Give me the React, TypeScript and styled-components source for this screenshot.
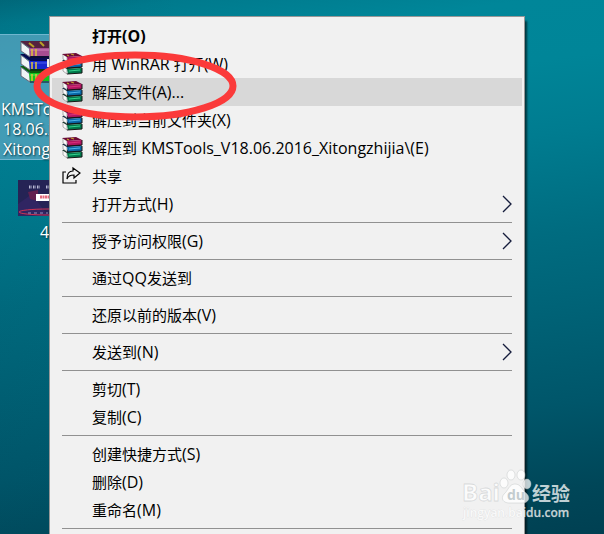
import React from "react";
import styled, { createGlobalStyle } from "styled-components";

const GlobalStyle = createGlobalStyle`
  * { box-sizing: border-box; }
  body { margin: 0; overflow: hidden; }
`;

const Desktop = styled.main`
  position: relative;
  min-height: 100vh;
  overflow: hidden;
  padding-top: 34px;
  font-family: "Open Sans", "Noto Sans CJK SC", sans-serif;
  background:
    linear-gradient(90deg, rgba(0, 60, 80, 0.08), rgba(0, 60, 80, 0) 30%),
    linear-gradient(172deg, #006b7d 0%, #007a8d 4%, #008699 12%, #008598 22%, #007c90 34%, #006c80 50%, #006377 62%, #00566a 78%, #004658 92%, #004052 100%);
`;

const Shortcut = styled.figure<{ $selected?: boolean }>`
  width: 96px;
  margin: 0 0 16px;
  padding-top: 4px;
  height: ${(p) => (p.$selected ? "126px" : "auto")};
  color: #fff;
  background: ${(p) => (p.$selected ? "rgba(110, 175, 205, 0.6)" : "none")};
  border: ${(p) => (p.$selected ? "1px solid #6fb6cf" : "0")};
  border-left-width: 0;
  svg { display: block; margin-left: 18px; }
`;

const Caption = styled.figcaption<{ $single?: boolean }>`
  display: flex;
  flex-direction: column;
  padding-top: ${(p) => (p.$single ? "6px" : "16px")};
  padding-left: ${(p) => (p.$single ? "40px" : "1px")};
  font-size: 16px;
  line-height: 20px;
  white-space: nowrap;
  text-shadow: 1px 1px 2px #00303c;
  span + span { padding-left: 2px; }
`;

const Menu = styled.div`
  position: absolute;
  top: 16px;
  left: 49px;
  right: 79px;
  padding: 5px 2px;
  background: #f1f1f1;
  border: 1px solid #979797;
  box-shadow: 3px 4px 2px -1px rgba(0, 0, 0, 0.6);
`;

const Item = styled.button<{ $active?: boolean; $strong?: boolean }>`
  display: grid;
  grid-template-columns: 30px 1fr 12px;
  align-items: center;
  width: 100%;
  height: 28px;
  padding: 0 8px 0 10px;
  border: 0;
  background: ${(p) => (p.$active ? "#d8d8d8" : "transparent")};
  color: #000;
  font-family: inherit;
  font-size: 15px;
  font-weight: ${(p) => (p.$strong ? 700 : 400)};
  line-height: 28px;
  text-align: left;
  white-space: nowrap;
  svg { display: block; }
`;

const Latin = styled.span`
  font-size: 16px;
`;

const Divider = styled.hr`
  height: 1px;
  margin: 4px 10px;
  border: 0;
  background: #919191;
`;

const Marker = styled.svg`
  position: absolute;
  top: 46px;
  left: 28px;
  pointer-events: none;
`;

const Watermark = styled.svg`
  position: absolute;
  right: 30px;
  bottom: 10px;
  pointer-events: none;
`;

const Books = () => (
  <svg width="21" height="22" viewBox="0 0 21 22" aria-hidden="true">
    {[
      { y: 13, c: "#00794a", d: "#052d20", l: "#35d08d" },
      { y: 7, c: "#0868a8", d: "#06203d", l: "#4fb3e6" },
      { y: 1, c: "#b01560", d: "#6b0a35", l: "#d8307a" },
    ].map((b) => (
      <g key={b.y}>
        <path d={`M1 ${b.y}L5 ${b.y + 3}V${b.y + 8}L1 ${b.y + 5}Z`} fill="#f8f8f8" stroke="#666" strokeWidth="0.5" />
        <path d={`M0 ${b.y}L14 ${b.y - 1}L20 ${b.y + 2}L5 ${b.y + 3}Z`} fill={b.d} />
        <path d={`M5 ${b.y + 3}L20 ${b.y + 2}V${b.y + 7}L6 ${b.y + 8}Z`} fill={b.c} />
        <path d={`M7 ${b.y + 5}L18 ${b.y + 4}`} stroke={b.l} />
        <path d={`M5 ${b.y + 8}L20 ${b.y + 7}M20 ${b.y + 2}V${b.y + 7}`} stroke="#151515" />
      </g>
    ))}
    <path d="M5 2L7 3M9 1L12 2" stroke="#c9a02c" strokeWidth="1.2" />
  </svg>
);

const Archive = () => (
  <svg width="46" height="44" viewBox="0 0 46 44" aria-hidden="true">
    {[
      { y: 28, c: "#12c51b", d: "#075f0c", l: "#5fe45f" },
      { y: 16, c: "#1526cf", d: "#060b53", l: "#4a5cf0" },
      { y: 3, c: "#a64d91", d: "#55213f", l: "#cf86bd" },
    ].map((b) => (
      <g key={b.y}>
        <path d={`M3 ${b.y}L12 ${b.y + 7}V${b.y + 15}L3 ${b.y + 9}Z`} fill="#eef4f6" stroke="#667" />
        <path d={`M2 ${b.y - 1}H34L44 ${b.y + 6}H12Z`} fill={b.d} />
        <path d={`M11 ${b.y + 6}H44V${b.y + 14}H12Z`} fill={b.c} />
        <path d={`M12 ${b.y + 8}H44`} stroke={b.l} />
        <path d={`M14 ${b.y + 7}V${b.y + 14}M18 ${b.y + 7}V${b.y + 14}`} stroke="#e0c33a" strokeWidth="1.5" />
        <path d={`M12 ${b.y + 15}H44`} stroke="#101018" />
      </g>
    ))}
    <path d="M11 4L16 8M22 3L26 7" stroke="#b9a028" strokeWidth="2" />
    <path d="M30 20V28" stroke="#eee" strokeWidth="2" />
  </svg>
);

const Share = () => (
  <svg width="20" height="20" viewBox="0 0 20 20" fill="none" stroke="#000" strokeWidth="1.2" aria-hidden="true">
    <path d="M4 6H1V17H14V14" />
    <path d="M11 2L18 7L12 12V9C8 9 6 10 5 13C5 8 7 5 11 5Z" />
  </svg>
);

const Chevron = () => (
  <svg width="12" height="18" viewBox="0 0 12 18" fill="none" aria-hidden="true">
    <path d="M1 1L9 9L1 17" stroke="#151c3c" strokeWidth="1.3" />
  </svg>
);

const Poster = () => (
  <svg width="48" height="36" viewBox="0 0 48 36" aria-hidden="true">
    <path d="M0 0H48V36H0Z" fill="#252355" />
    <path d="M0 24L14 14L30 36H0Z" fill="#302562" />
    <path d="M10 12L20 10V21L12 19Z" fill="#62204f" />
    <path d="M11 7H14M15 7H18M19 7H22M28 7H34" stroke="#b9b9d6" strokeWidth="3" strokeDasharray="1 0.5" />
    <path d="M18 14H48V21H18Z" fill="#fff" />
    <path d="M22 17H48" stroke="#e4687c" strokeWidth="3" strokeDasharray="2 0.5" />
    <ellipse cx="30" cy="32" rx="29" ry="3" fill="none" stroke="#cf3454" />
    <path d="M10 33H30" stroke="#9b93c0" strokeDasharray="3 3" />
  </svg>
);

type Entry = { label: string; icon?: "books" | "share"; sub?: boolean; strong?: boolean; active?: boolean };

const groups: Entry[][] = [
  [
    { label: "打开(O)", strong: true },
    { label: "用 WinRAR 打开(W)", icon: "books" },
    { label: "解压文件(A)...", icon: "books", active: true },
    { label: "解压到当前文件夹(X)", icon: "books" },
    { label: "解压到 KMSTools_V18.06.2016_Xitongzhijia\\(E)", icon: "books" },
    { label: "共享", icon: "share" },
    { label: "打开方式(H)", sub: true },
  ],
  [{ label: "授予访问权限(G)", sub: true }],
  [{ label: "通过QQ发送到" }],
  [{ label: "还原以前的版本(V)" }],
  [{ label: "发送到(N)", sub: true }],
  [{ label: "剪切(T)" }, { label: "复制(C)" }],
  [{ label: "创建快捷方式(S)" }, { label: "删除(D)" }, { label: "重命名(M)" }],
];

/* Latin runs are set one pixel larger than the Chinese text around them. */
const Label = ({ text }: { text: string }) => (
  <span>
    {text.split(/([\x20-\x7e]+)/).map((run, i) => (i % 2 ? <Latin key={i}>{run}</Latin> : run))}
  </span>
);

export default function App() {
  return (
    <>
      <GlobalStyle />
      <Desktop>
        <Shortcut $selected>
          <Archive />
          <Caption>
            <span>KMSTo</span>
            <span>18.06.2</span>
            <span>Xitong</span>
          </Caption>
        </Shortcut>
        <Shortcut>
          <Poster />
          <Caption $single>4</Caption>
        </Shortcut>
        <Menu role="menu">
          {groups.map((group) => (
            <React.Fragment key={group[0].label}>
              {group.map((e) => (
                <Item key={e.label} role="menuitem" $active={e.active} $strong={e.strong}>
                  <span>
                    {e.icon === "books" && <Books />}
                    {e.icon === "share" && <Share />}
                  </span>
                  <Label text={e.label} />
                  {e.sub && <Chevron />}
                </Item>
              ))}
              <Divider />
            </React.Fragment>
          ))}
        </Menu>
        <Marker width="216" height="80" viewBox="28 46 216 80" aria-hidden="true">
          <ellipse cx="135" cy="86" rx="98" ry="31" fill="none" stroke="#fb3a3a" strokeWidth="7" />
        </Marker>
        <Watermark width="112" height="58" viewBox="462 466 112 58" role="img" aria-label="Baidu">
          <g fill="#fff" fillOpacity="0.75" stroke="#b9bdbf" strokeOpacity="0.5" strokeWidth="0.8">
            <text x="462" y="501" fontSize="24" fontWeight="700" fontFamily="Open Sans">Bai</text>
            <ellipse cx="504" cy="483" rx="4" ry="5" />
            <ellipse cx="511" cy="475" rx="4" ry="5" />
            <ellipse cx="521" cy="475" rx="4" ry="5" />
            <ellipse cx="527" cy="484" rx="4" ry="5" />
            <path d="M515 484C509 484 508 491 504 494C500 499 504 503 509 503H522C529 503 531 497 526 493C522 490 521 484 515 484Z" />
          </g>
          <g fill="#fff" fillOpacity="0.75">
            <text x="532" y="501" fontSize="19" fontWeight="700" fontFamily="Noto Sans CJK SC">经验</text>
            <text x="463" y="517" fontSize="12" fontWeight="600" fontFamily="Open Sans" stroke="#b9bdbf" strokeOpacity="0.4" strokeWidth="0.6" paintOrder="stroke">jingyan.baidu.com</text>
          </g>
          <text x="507" y="500" fontSize="14" fontWeight="700" fontFamily="Open Sans" fill="#c3cccf">du</text>
        </Watermark>
      </Desktop>
    </>
  );
}
